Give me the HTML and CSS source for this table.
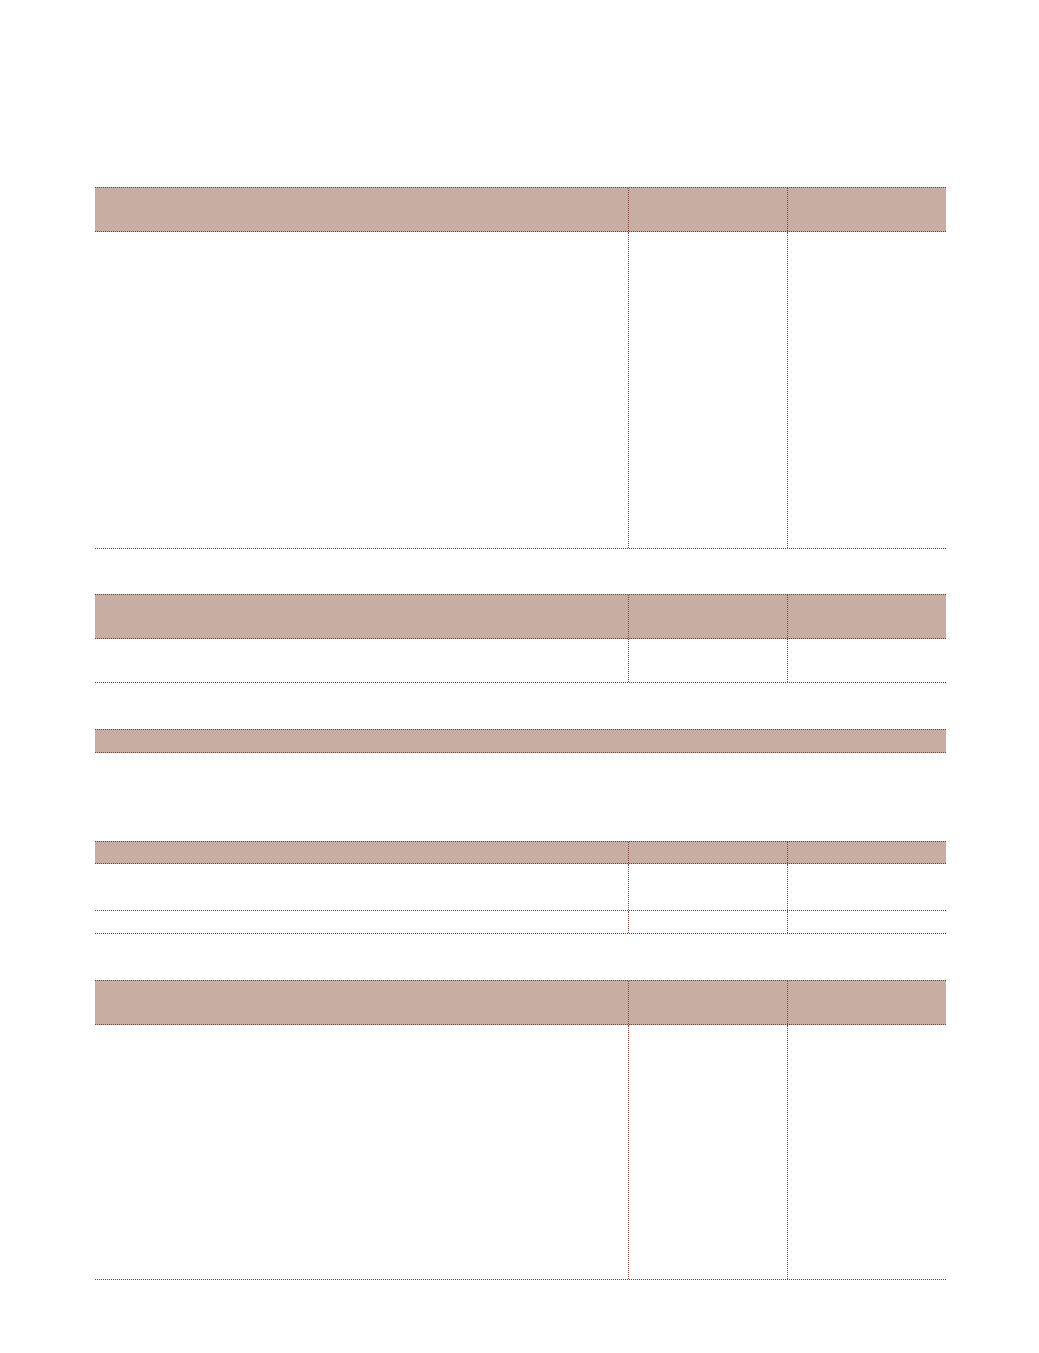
FILE: index.html
```html
<!DOCTYPE html>
<html>
<head>
<meta charset="utf-8">
<link rel="stylesheet" href="styles.css">
</head>
<body>
<div class="page">
  <div class="tbl t1">
    <div class="row head h45"><div class="c"></div><div class="c div"></div><div class="c div"></div></div>
    <div class="row body b317"><div class="c"></div><div class="c div"></div><div class="c div"></div></div>
  </div>
  <div class="tbl t2">
    <div class="row head h45"><div class="c"></div><div class="c div"></div><div class="c div"></div></div>
    <div class="row body b44"><div class="c"></div><div class="c div"></div><div class="c div"></div></div>
  </div>
  <div class="tbl t3">
    <div class="row head single h24"><div class="c"></div></div>
  </div>
  <div class="tbl t4">
    <div class="row head h23"><div class="c"></div><div class="c div"></div><div class="c div"></div></div>
    <div class="row body b47"><div class="c"></div><div class="c div"></div><div class="c div"></div></div>
    <div class="row body b23"><div class="c"></div><div class="c div"></div><div class="c div"></div></div>
  </div>
  <div class="tbl t5">
    <div class="row head h45"><div class="c"></div><div class="c div"></div><div class="c div"></div></div>
    <div class="row body b255"><div class="c"></div><div class="c div"></div><div class="c div"></div></div>
  </div>
</div>
</body>
</html>
```

FILE: styles.css
```css
html, body {
  margin: 0;
  padding: 0;
  background: #ffffff;
  font-family: "Liberation Sans", Arial, sans-serif;
}
.page {
  padding: 187px 0 0 95px;
}
.tbl {
  width: 851px;
}
.row {
  display: grid;
  grid-template-columns: 533px 159px 159px;
  box-sizing: border-box;
}
.row.single {
  grid-template-columns: 851px;
}
.head {
  background: #c7ada2;
  border-top: 1px dotted #6e3f35;
  border-bottom: 1px dotted #6e3f35;
}
.body {
  border-bottom: 1px dotted #6e3f35;
}
.c {
  box-sizing: border-box;
}
.c.div {
  border-left: 1px dotted #7a4c42;
}
.h45 { height: 45px; }
.h24 { height: 24px; }
.h23 { height: 23px; }
.b317 { height: 317px; }
.b44 { height: 44px; }
.b47 { height: 47px; }
.b23 { height: 23px; }
.b255 { height: 255px; }
.t2 { margin-top: 45px; }
.t3 { margin-top: 46px; }
.t4 { margin-top: 88px; }
.t5 { margin-top: 46px; }
```
